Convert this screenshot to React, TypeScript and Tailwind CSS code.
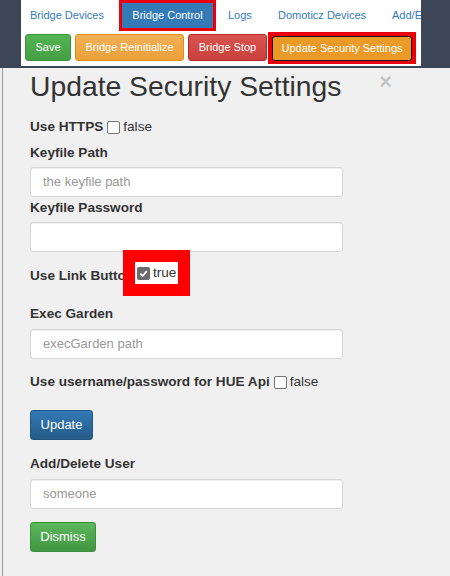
import React from "react";

const font = { fontFamily: '"Liberation Sans", Arial, Helvetica, sans-serif' };

function Box({ checked }: { checked?: boolean }) {
  if (checked) {
    return (
      <span className="inline-flex items-center justify-center w-[13px] h-[13px] rounded-[2px] bg-[#6b6b6b] align-middle">
        <svg width="11" height="11" viewBox="0 0 12 12">
          <path d="M2.5 6.2 L5 8.7 L9.6 3.4" fill="none" stroke="#fff" strokeWidth="1.9" />
        </svg>
      </span>
    );
  }
  return (
    <span className="inline-block w-[13px] h-[13px] rounded-[2px] border border-[#767676] bg-white align-middle" />
  );
}

function Label({ children, mt, extra }: { children: React.ReactNode; mt: string; extra?: React.ReactNode }) {
  return (
    <div className={`${mt} h-[20px] leading-[20px] text-[13.6px] font-bold text-[#333] flex items-center whitespace-nowrap`}>
      <span>{children}</span>
      {extra}
    </div>
  );
}

function Input({ mt, placeholder, h }: { mt: string; placeholder?: string; h: string }) {
  return (
    <div
      className={`${mt} ${h} w-[313px] bg-white border border-[#d6d6d6] rounded-[3px] shadow-[inset_0_1px_1px_rgba(0,0,0,0.075)] flex items-center pl-[12px] text-[13px] text-[#999]`}
    >
      {placeholder}
    </div>
  );
}

export default function App() {
  return (
    <div style={font} className="w-[450px] h-[576px] overflow-hidden bg-[#f0f0f0] relative">
      {/* top area */}
      <div className="bg-[#3c4657] h-[68px] pl-[21px]">
        <div className="w-[400px] h-[66px] bg-white overflow-hidden relative">
          <div className="flex h-[31px] text-[11px] text-[#337ab7] whitespace-nowrap">
            <div className="shrink-0 w-[98px] pl-[9px] flex items-center">Bridge Devices</div>
            <div className="shrink-0 w-[97px] bg-[#337ab7] border-[3px] border-[#e8000b] text-white flex items-center justify-center">
              Bridge Control
            </div>
            <div className="shrink-0 w-[50px] pl-[12px] flex items-center">Logs</div>
            <div className="shrink-0 w-[114px] pl-[12px] flex items-center">Domoticz Devices</div>
            <div className="shrink-0 pl-[12px] flex items-center">Add/Edit Devices</div>
          </div>
          <div className="flex items-start h-[35px] text-[11px] text-white whitespace-nowrap">
            <div className="shrink-0 ml-[4px] mt-[3px] w-[46px] h-[27px] rounded-[3px] bg-gradient-to-b from-[#52b452] to-[#44a044] border border-[#3e8f3e] flex items-center justify-center">
              Save
            </div>
            <div className="shrink-0 ml-[4px] mt-[3px] w-[109px] h-[27px] rounded-[3px] bg-gradient-to-b from-[#f2b055] to-[#eca03a] border border-[#e38d13] flex items-center justify-center">
              Bridge Reinitialize
            </div>
            <div className="shrink-0 ml-[4px] mt-[3px] w-[79px] h-[27px] rounded-[3px] bg-gradient-to-b from-[#d9534f] to-[#c9403c] border border-[#b92c28] flex items-center justify-center">
              Bridge Stop
            </div>
            <div className="shrink-0 ml-[1px] mt-[1px] w-[148px] h-[32px] bg-[#e8000b] flex items-center justify-center">
              <div className="w-[140px] h-[25px] rounded-[3px] bg-[#ec9a27] border border-[#1a1a1a] flex items-center justify-center">
                Update Security Settings
              </div>
            </div>
          </div>
        </div>
      </div>

      {/* modal */}
      <div className="absolute left-[2px] top-[68px] w-[1px] h-[520px] bg-[#9a9a9a]" />
      <div className="pl-[30px] relative">
        <div className="absolute right-[58px] top-[3px] text-[22px] font-bold text-black/20 leading-[22px]">×</div>
        <div className="h-[36px] leading-[36px] text-[28.3px] text-[#333] whitespace-nowrap">Update Security Settings</div>

        <Label
          mt="mt-[13px]"
          extra={
            <span className="ml-[4px] flex items-center font-normal text-[13.6px] text-[#333]">
              <Box />
              <span className="ml-[3px]">false</span>
            </span>
          }
        >
          Use HTTPS
        </Label>
        <Label mt="mt-[6px]">Keyfile Path</Label>
        <Input mt="mt-[4px]" h="h-[30px]" placeholder="the keyfile path" />
        <Label mt="mt-[1px]">Keyfile Password</Label>
        <Input mt="mt-[4px]" h="h-[30px]" />

        <div className="relative">
          <Label mt="mt-[14px]">Use Link Button</Label>
          <div className="absolute left-[93px] top-[-16px] w-[67px] h-[46px] bg-[#ff0000] flex items-center justify-center">
            <div className="w-[43px] h-[22px] bg-white flex items-center pl-[2px] text-[13.6px] text-[#333]">
              <Box checked />
              <span className="ml-[3px]">true</span>
            </div>
          </div>
        </div>

        <Label mt="mt-[18px]">Exec Garden</Label>
        <Input mt="mt-[5px]" h="h-[30px]" placeholder="execGarden path" />
        <Label
          mt="mt-[13px]"
          extra={
            <span className="ml-[4px] flex items-center font-normal text-[13.6px] text-[#333]">
              <Box />
              <span className="ml-[3px]">false</span>
            </span>
          }
        >
          Use username/password for HUE Api
        </Label>

        <div className="mt-[18px] w-[63px] h-[30px] rounded-[3px] bg-gradient-to-b from-[#337ab7] to-[#265a88] border border-[#245580] text-white text-[13px] flex items-center justify-center">
          Update
        </div>

        <Label mt="mt-[14px]">Add/Delete User</Label>
        <Input mt="mt-[5px]" h="h-[30px]" placeholder="someone" />

        <div className="mt-[13px] w-[66px] h-[30px] rounded-[3px] bg-gradient-to-b from-[#5cb85c] to-[#419641] border border-[#3e8f3e] text-white text-[13px] flex items-center justify-center">
          Dismiss
        </div>
      </div>
    </div>
  );
}
